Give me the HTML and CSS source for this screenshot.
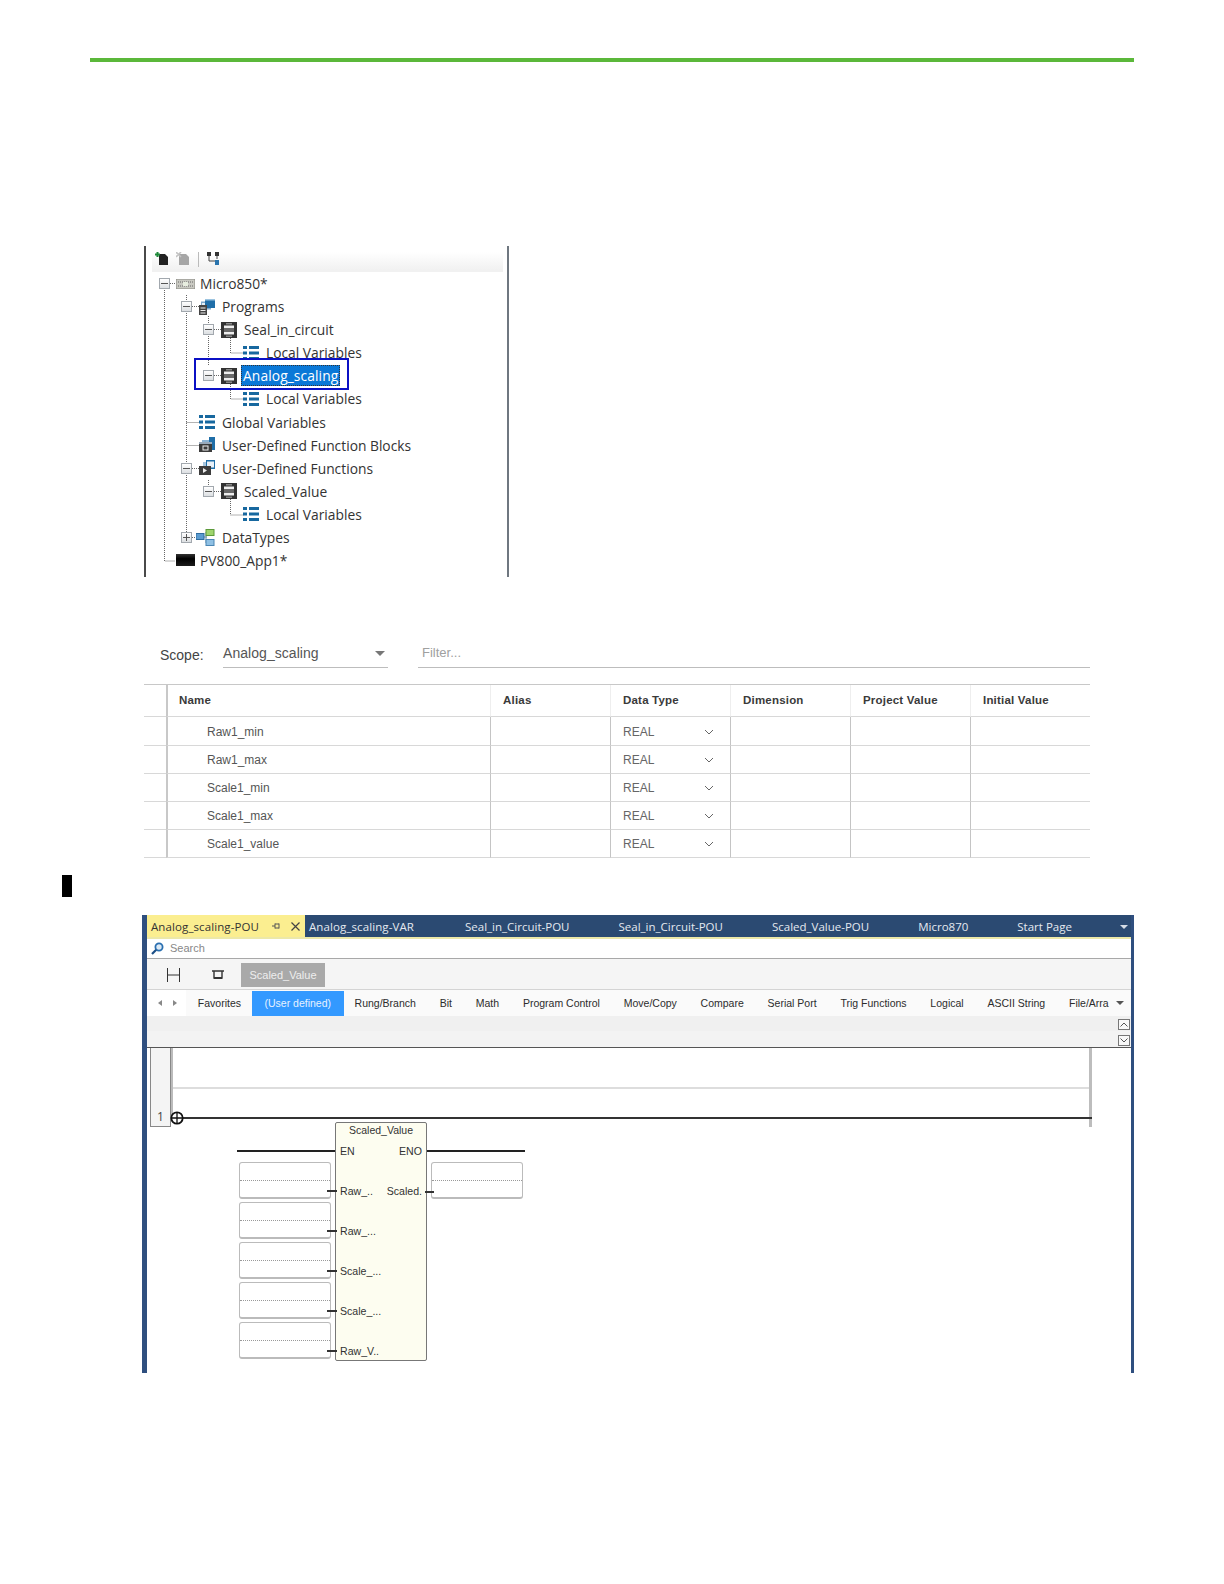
FILE: index.html
```html
<!DOCTYPE html>
<html lang="en">
<head>
<meta charset="utf-8">
<title>Analog scaling</title>
<link rel="stylesheet" href="styles.css">
</head>
<body>
<svg class="defs" width="0" height="0" aria-hidden="true">
  <symbol id="i-pou" viewBox="0 0 16 16"><rect width="16" height="16" fill="#333"/><rect x="3" y="3.500" width="10" height="9" fill="#eee"/><rect x="3" y="6" width="10" height="4" fill="#6a6a6a"/><rect x="5" y="1" width="6" height="1.500" fill="#888"/><rect x="5" y="13.500" width="6" height="1.500" fill="#888"/></symbol>
  <symbol id="i-list" viewBox="0 0 16 14"><g fill="#17689f"><rect y="0" width="4" height="3"/><rect x="6" y="0" width="10" height="3"/><rect y="5.5" width="4" height="3"/><rect x="6" y="5.5" width="10" height="3"/><rect y="11" width="4" height="3"/><rect x="6" y="11" width="10" height="3"/></g></symbol>
  <symbol id="i-programs" viewBox="0 0 16 16"><rect x="2" y="2.500" width="10" height="8" fill="#7fa9cc"/><rect x="3" y="4" width="8" height="2" fill="#e6eff6"/><rect x="6" y="0" width="10" height="9" fill="#1f6ea8"/><rect x="6" y="0" width="10" height="1.500" fill="#9cc4e0"/><rect x="0" y="6" width="8" height="10" fill="#444"/><rect x="1.500" y="8.500" width="5" height="1" fill="#eee"/><rect x="1.500" y="11" width="5" height="1" fill="#eee"/><rect x="1.500" y="13.500" width="5" height="1" fill="#eee"/></symbol>
  <symbol id="i-udfb" viewBox="0 0 16 16"><rect x="3" y="3" width="9" height="6" fill="#8db4d4"/><rect x="10" y="0" width="6" height="13" fill="#1f6ea8"/><rect x="0" y="5" width="13" height="10" fill="#3c3c3c"/><rect x="0" y="5" width="13" height="2" fill="#9ab" /><rect x="4" y="9" width="5" height="4" fill="none" stroke="#eee"/></symbol>
  <symbol id="i-udf" viewBox="0 0 16 16"><rect x="4" y="2" width="9" height="7" fill="#a8c6de"/><rect x="7" y="0" width="9" height="9" fill="#1f6ea8"/><rect x="8" y="1.500" width="7" height="6" fill="#e8f0f8"/><rect x="0" y="6" width="12" height="9" fill="#3c3c3c"/><path d="M4 8l4 2.500L4 13z" fill="#eee"/></symbol>
  <symbol id="i-types" viewBox="0 0 19 17"><path d="M8 8h3M10 3v11" stroke="#6b8fa8" fill="none"/><rect y="4.500" width="8" height="6" fill="#5b9bd0" stroke="#2f6c9e"/><rect x="10" y="0.500" width="8" height="6" fill="#9fd46d" stroke="#5c9a3a"/><rect x="10" y="10.500" width="8" height="6" fill="#8fc0e4" stroke="#4b86b3"/></symbol>
  <symbol id="i-micro" viewBox="0 0 19 10"><rect width="19" height="10" fill="#c9c9c2" stroke="#8a8a84"/><path d="M2 3h15M2 7h15" stroke="#666" stroke-dasharray="1 1"/><rect x="7" y="3" width="5" height="4" fill="#e8eee0"/></symbol>
</svg>

<main class="page">
  <div class="rule"></div>

  <section class="tree-panel">
    <div class="tree-tools">
      <svg class="tool" width="13" height="13" viewBox="0 0 13 13"><path d="M4 2h6l3 3v8H4z" fill="#222"/><path d="M2.500 0v5M0 2.500h5" stroke="#1f8a3a" stroke-width="2"/></svg>
      <svg class="tool" width="13" height="13" viewBox="0 0 13 13"><path d="M3 2h7l3 3v8H3z" fill="#a6a6a6"/><path d="M0 0l5 5M5 0L0 5" stroke="#c4c4c4" stroke-width="1.600"/></svg>
      <span class="tool-sep"></span>
      <svg class="tool" width="12" height="13" viewBox="0 0 12 13"><path d="M2 4v5h6M10 4v3" stroke="#444" fill="none"/><rect width="4" height="4" fill="#333"/><rect x="8" width="4" height="4" fill="#333"/><rect x="8" y="8" width="4" height="5" fill="#2a74ad"/></svg>
    </div>
    <svg class="tree-lines" width="364" height="330" viewBox="0 0 364 330">
      <path d="M18.500 44v271h11M40.500 49v242M62.500 70v50M84.500 92v15h13M84.500 138v15h13M62.500 234v12M84.500 253v16h13M24 37.500h5M46 60.500h7M68 83.500h7M68 129.500h7M40.500 176.500h13M40.500 199.500h13M46 222.500h7M68 245.500h7M46 291.500h5" fill="none" stroke="#666" stroke-dasharray="1 1"/>
    </svg>
    <ul class="tree">
      <li class="node lv0"><span class="box minus"></span><svg class="ic ic-micro"><use href="#i-micro"/></svg><span>Micro850*</span></li>
      <li class="node lv1"><span class="box minus"></span><svg class="ic"><use href="#i-programs"/></svg><span>Programs</span></li>
      <li class="node lv2"><span class="box minus"></span><svg class="ic"><use href="#i-pou"/></svg><span>Seal_in_circuit</span></li>
      <li class="node lv3"><span class="box none"></span><svg class="ic ic-list"><use href="#i-list"/></svg><span>Local Variables</span></li>
      <li class="node lv2"><span class="box minus"></span><svg class="ic"><use href="#i-pou"/></svg><span class="selected">Analog_scaling</span></li>
      <li class="node lv3"><span class="box none"></span><svg class="ic ic-list"><use href="#i-list"/></svg><span>Local Variables</span></li>
      <li class="node lv1"><span class="box none"></span><svg class="ic ic-list"><use href="#i-list"/></svg><span>Global Variables</span></li>
      <li class="node lv1"><span class="box none"></span><svg class="ic"><use href="#i-udfb"/></svg><span>User-Defined Function Blocks</span></li>
      <li class="node lv1"><span class="box minus"></span><svg class="ic"><use href="#i-udf"/></svg><span>User-Defined Functions</span></li>
      <li class="node lv2"><span class="box minus"></span><svg class="ic"><use href="#i-pou"/></svg><span>Scaled_Value</span></li>
      <li class="node lv3"><span class="box none"></span><svg class="ic ic-list"><use href="#i-list"/></svg><span>Local Variables</span></li>
      <li class="node lv1"><span class="box plus"></span><svg class="ic ic-types"><use href="#i-types"/></svg><span>DataTypes</span></li>
      <li class="node lv0"><span class="box none"></span><span class="ic-screen"></span><span>PV800_App1*</span></li>
    </ul>
    <div class="tree-focus"></div>
  </section>

  <section class="vars">
    <div class="scope">
      <span class="scope-label">Scope:</span>
      <div class="scope-select"><span>Analog_scaling</span><i class="tri"></i></div>
      <div class="scope-filter">Filter...</div>
    </div>
    <div class="grid">
      <div class="cell head gut"></div><div class="cell head">Name</div><div class="cell head">Alias</div><div class="cell head">Data Type</div><div class="cell head">Dimension</div><div class="cell head">Project Value</div><div class="cell head">Initial Value</div>

      <div class="cell gut"></div><div class="cell name">Raw1_min</div><div class="cell"></div><div class="cell type">REAL<svg width="10" height="6" viewBox="0 0 10 6"><path d="M1 1l4 4 4-4" fill="none" stroke="#666"/></svg></div><div class="cell"></div><div class="cell"></div><div class="cell"></div>

      <div class="cell gut"></div><div class="cell name">Raw1_max</div><div class="cell"></div><div class="cell type">REAL<svg width="10" height="6" viewBox="0 0 10 6"><path d="M1 1l4 4 4-4" fill="none" stroke="#666"/></svg></div><div class="cell"></div><div class="cell"></div><div class="cell"></div>

      <div class="cell gut"></div><div class="cell name">Scale1_min</div><div class="cell"></div><div class="cell type">REAL<svg width="10" height="6" viewBox="0 0 10 6"><path d="M1 1l4 4 4-4" fill="none" stroke="#666"/></svg></div><div class="cell"></div><div class="cell"></div><div class="cell"></div>

      <div class="cell gut"></div><div class="cell name">Scale1_max</div><div class="cell"></div><div class="cell type">REAL<svg width="10" height="6" viewBox="0 0 10 6"><path d="M1 1l4 4 4-4" fill="none" stroke="#666"/></svg></div><div class="cell"></div><div class="cell"></div><div class="cell"></div>

      <div class="cell gut"></div><div class="cell name">Scale1_value</div><div class="cell"></div><div class="cell type">REAL<svg width="10" height="6" viewBox="0 0 10 6"><path d="M1 1l4 4 4-4" fill="none" stroke="#666"/></svg></div><div class="cell"></div><div class="cell"></div><div class="cell"></div>
    </div>
  </section>

  <div class="marker"></div>

  <section class="ide">
    <div class="tabs">
      <div class="tab active"><span>Analog_scaling-POU</span>
        <svg class="pin" width="8" height="8" viewBox="0 0 8 8"><path d="M0 4h3M3 1.500v5M3 2h4M3 6h4M7 1.500v5" stroke="#555" fill="none"/></svg>
        <svg class="close" width="9" height="9" viewBox="0 0 9 9"><path d="M.5.5l8 8M8.500.5l-8 8" stroke="#444" stroke-width="1.200"/></svg>
      </div>
      <div class="tab-rest">
        <span class="tab-var">Analog_scaling-VAR</span><span>Seal_in_Circuit-POU</span><span>Seal_in_Circuit-POU</span><span>Scaled_Value-POU</span><span>Micro870</span><span>Start Page</span>
      </div>
      <i class="tab-menu"></i>
    </div>
    <div class="search">
      <svg width="13" height="13" viewBox="0 0 13 13"><circle cx="8" cy="5" r="3.600" fill="#dceaf6" stroke="#2a6fb0" stroke-width="1.800"/><path d="M5.200 7.800L1 12" stroke="#1c4f86" stroke-width="2.200"/></svg>
      <span>Search</span>
    </div>
    <div class="toolbar">
      <svg class="t-rung" width="13" height="14" viewBox="0 0 13 14"><path d="M.5 0v14M12.500 0v14M0 7h13" stroke="#333" fill="none"/></svg>
      <svg class="t-branch" width="12" height="10" viewBox="0 0 12 10"><path d="M0 1h12M2 1v7h8V1" stroke="#333" stroke-width="1.400" fill="none"/><rect x="2" y="7" width="8" height="2" fill="#333"/></svg>
      <span class="t-chip">Scaled_Value</span>
    </div>
    <div class="palette">
      <div class="pal-nav"><i class="tl"></i><i class="tr"></i></div>
      <span class="pal">Favorites</span>
      <span class="pal on">(User defined)</span>
      <span class="pal">Rung/Branch</span><span class="pal">Bit</span><span class="pal">Math</span><span class="pal">Program Control</span><span class="pal">Move/Copy</span><span class="pal">Compare</span><span class="pal">Serial Port</span><span class="pal">Trig Functions</span><span class="pal">Logical</span><span class="pal">ASCII String</span><span class="pal">File/Arra</span>
      <i class="pal-more"></i>
    </div>
    <div class="bands">
      <div class="band b1"><span class="spin"><svg width="8" height="5" viewBox="0 0 8 5"><path d="M.5 4.500L4 1l3.500 3.500" fill="none" stroke="#555"/></svg></span></div>
      <div class="band b2"><span class="spin"><svg width="8" height="5" viewBox="0 0 8 5"><path d="M.5.5L4 4 7.500 .5" fill="none" stroke="#555"/></svg></span></div>
    </div>
    <div class="canvas">
      <div class="gutter">1</div>
      <div class="gutter-edge"></div>
      <div class="rung-top"></div>
      <div class="rung-end"></div>
      <div class="rung"></div>
      <svg class="rung-dot" width="14" height="14" viewBox="0 0 14 14"><circle cx="7" cy="7" r="5.700" fill="#fff" stroke="#111" stroke-width="1.800"/><path d="M7 2v10M2 7h10" stroke="#111" stroke-width="1.300"/></svg>

      <div class="wire w-en"></div>
      <div class="wire w-eno"></div>

      <div class="inputs">
        <div class="var-box"></div><div class="var-box"></div><div class="var-box"></div><div class="var-box"></div><div class="var-box"></div>
      </div>
      <div class="var-box out"></div>

      <div class="block">
        <div class="block-title">Scaled_Value</div>
        <div class="pin-row"><span class="lbl">EN</span><span class="lbl">ENO</span></div>
        <div class="pin-row stub"><span class="lbl">Raw_..</span><span class="lbl stub-out">Scaled.</span></div>
        <div class="pin-row stub"><span class="lbl">Raw_...</span></div>
        <div class="pin-row stub"><span class="lbl">Scale_...</span></div>
        <div class="pin-row stub"><span class="lbl">Scale_...</span></div>
        <div class="pin-row stub"><span class="lbl">Raw_V..</span></div>
      </div>
    </div>
  </section>
</main>
</body>
</html>
```
FILE: styles.css
```css
* { box-sizing: border-box; }
html, body { margin: 0; padding: 0; background: #fff; }
body { height: 1584px; overflow: hidden; font-family: "Liberation Sans", Arial, sans-serif; color: #333; }
.defs { position: absolute; }
.page { padding-top: 58px; }
.rule { width: 1044px; height: 4px; margin-left: 90px; background: #5bb83a; }

/* project tree */
.tree-panel { position: relative; width: 365px; height: 331px; margin: 184px 0 0 144px; border-left: 2px solid #4a4a4a; border-right: 2px solid #6f7780; padding: 6px 4px 0 6px; font-family: "Open Sans", sans-serif; font-size: 13.8px; color: #333; }
.tree-tools { display: flex; align-items: flex-start; height: 20px; padding: 0 0 0 3px; background: linear-gradient(#fff, #f1f1f1 90%); }
.tool { margin-right: 8px; flex: none; }
.tool-sep { width: 1px; height: 15px; background: #bbb; margin: 0 8px 0 1px; }
.tree { list-style: none; margin: 0; padding: 0; position: relative; left: -6px; }
.node { display: grid; grid-template-columns: 18px 23px auto; align-items: center; height: 23.080px; white-space: nowrap; justify-content: start; }
.lv0 { padding-left: 13px; }
.lv1 { padding-left: 35px; }
.lv2 { padding-left: 57px; }
.lv3 { padding-left: 79px; }
.box { position: relative; display: block; width: 11px; height: 11px; }
.minus, .plus { border: 1px solid #a2a8ae; background: linear-gradient(#fff, #dcdfe2); }
.minus::before, .plus::before { content: ""; position: absolute; left: 1px; right: 1px; top: 4px; height: 1px; background: #555; }
.plus::after { content: ""; position: absolute; top: 1px; bottom: 1px; left: 4px; width: 1px; background: #555; }
.ic { display: block; width: 16px; height: 16px; }
.ic-list { height: 14px; }
.ic-micro { width: 19px; height: 10px; margin-left: -1px; }
.ic-types { width: 19px; height: 17px; margin-left: -3px; }
.ic-screen { display: block; width: 19px; height: 12px; margin-left: -1px; background: linear-gradient(#333, #000 40%, #1c1c1c); }
.selected { margin-left: -3px; padding: 1px 2px 0; height: 21px; line-height: 20px; letter-spacing: .1px; background: #0a78d7; color: #fff; outline: 1px dotted #333; outline-offset: -1px; }
.tree-lines { position: absolute; left: 0; top: 0; pointer-events: none; }
.tree-focus { position: absolute; left: 48px; top: 112px; width: 155px; height: 32px; border: 2px solid #0b10c4; pointer-events: none; }

/* variable table */
.vars { width: 946px; margin: 63px 0 0 144px; }
.scope { display: flex; align-items: flex-end; height: 28px; }
.scope-label { width: 79px; padding: 0 0 5px 16px; font-size: 14px; color: #444; }
.scope-select { display: flex; justify-content: space-between; align-items: center; width: 165px; height: 28px; padding: 0 2px 1px 0; border-bottom: 1px solid #bdbdbd; font-size: 14px; color: #555; letter-spacing: .05px; }
.tri { display: block; width: 0; height: 0; margin-right: 1px; border: 5px solid transparent; border-top-color: #777; border-bottom: 0; }
.scope-filter { flex: 1; height: 28px; margin-left: 30px; padding: 5px 0 0 4px; border-bottom: 1px solid #bdbdbd; font-size: 13px; color: #a0a0a0; }
.grid { display: grid; grid-template-columns: 22px 324px 120px 120px 120px 120px 120px; grid-template-rows: 32px 29px 28px 28px 28px 28px; margin-top: 16px; border-top: 1px solid #c8c8c8; }
.cell { display: flex; align-items: center; padding: 1px 0 0 12px; border-left: 1px solid #c4c4c4; border-bottom: 1px solid #d8d8d8; font-size: 12px; color: #555; }
.cell.gut { border-left: 0; }
.gut + .cell { border-left: 2px solid #c8c8c8; padding-left: 11px; }
.head { font-size: 11.500px; font-weight: 700; color: #3a3a3a; letter-spacing: .2px; border-left-color: #eee; padding-top: 0; padding-bottom: 1px; }
.gut + .name { padding-left: 39px; }
.type { justify-content: space-between; padding-right: 16px; color: #666; }
.marker { width: 10px; height: 22px; margin: 17px 0 0 62px; background: #000; }

/* editor */
.ide { width: 992px; height: 458px; margin: 18px 0 0 142px; border-left: 5px solid #2f4f7f; border-right: 3px solid #2f4f7f; display: flex; flex-direction: column; font-size: 11px; }
.tabs { display: flex; align-items: stretch; height: 24px; flex: none; background: #2b4a72; border-bottom: 2px solid #ece8a8; font-family: "Open Sans", sans-serif; font-size: 11.500px; color: #e4e9f0; position: relative; }
.tab { display: flex; align-items: center; white-space: nowrap; }
.active { flex: none; width: 158px; padding-left: 4px; background: #fbee90; color: #333; letter-spacing: .1px; }
.pin { margin-left: 13px; }
.close { margin-left: 11px; }
.tab-rest { display: flex; align-items: center; gap: 49px; padding: 1px 0 0 4px; white-space: nowrap; }
.tab-var { letter-spacing: .1px; margin-right: 2px; }
.tab-menu { position: absolute; right: 3px; top: 10px; width: 0; height: 0; border: 4px solid transparent; border-top-color: #d5dce6; border-bottom: 0; }
.search { display: flex; align-items: center; gap: 6px; height: 20px; flex: none; padding: 0 0 1px 4px; background: #fff; border-bottom: 1px solid #a8a8a8; color: #888; }
.toolbar { display: flex; align-items: center; height: 31px; flex: none; padding: 2px 0 0 20px; background: #f5f5f5; border-bottom: 1px solid #d4d4d4; }
.t-branch { margin-left: 32px; }
.t-chip { display: flex; align-items: center; justify-content: center; width: 84px; height: 24px; margin-left: 17px; background: #a9a9a9; color: #eee; }
.palette { display: flex; align-items: center; gap: 23.800px; height: 26px; flex: none; background: #fafafa; color: #2c2c2c; font-size: 10.500px; position: relative; }
.pal-nav { display: flex; align-items: center; gap: 11px; flex: none; width: 39px; margin-right: -12px; height: 26px; padding-left: 11px; background: #fff; }
.tl { border: 3.500px solid transparent; border-right: 4px solid #888; border-left: 0; }
.tr { border: 3.500px solid transparent; border-left: 4px solid #888; border-right: 0; }
.pal { flex: none; white-space: nowrap; }
.on { display: flex; align-items: center; justify-content: center; width: 92px; height: 25px; margin: 0 -13px; background: #3399ff; color: #e6f2ff; }
.pal-more { margin-left: -17px; border: 4px solid transparent; border-top: 4px solid #555; border-bottom: 0; }
.band { height: 15px; background: #f0f0f0; display: flex; justify-content: flex-end; align-items: flex-end; padding: 0 1px 1px 0; }
.b2 { height: 16px; background: #f3f3f3; }
.bands { flex: none; }
.spin { display: flex; align-items: center; justify-content: center; width: 12px; height: 11px; border: 1px solid #777; background: #f8f8f8; }
.canvas { position: relative; flex: 1; border-top: 1px solid #555; background: #fff; }
.gutter { position: absolute; left: 3px; top: 0; width: 21px; height: 79px; display: flex; align-items: flex-end; justify-content: center; padding-bottom: 1px; background: #f4f4f4; border: 1px solid #888; border-top: 0; font-family: "Open Sans", sans-serif; font-size: 12px; color: #444; }
.gutter-edge { position: absolute; left: 24px; top: 0; width: 2px; height: 67px; background: #bbb; }
.rung-top { position: absolute; left: 26px; top: 39px; width: 916px; height: 2px; background: #ddd; }
.rung-end { position: absolute; left: 942px; top: 0; width: 3px; height: 79px; background: #bdbdbd; }
.rung { position: absolute; left: 30px; top: 69px; width: 915px; height: 2px; background: #333; }
.rung-dot { position: absolute; left: 23px; top: 63px; }
.wire { position: absolute; height: 2px; background: #222; top: 102px; }
.w-en { left: 90px; width: 99px; }
.w-eno { left: 280px; width: 98px; }
.inputs { position: absolute; left: 92px; top: 114px; display: flex; flex-direction: column; gap: 3px; }
.var-box { position: relative; width: 92px; height: 37px; border: 1px solid #bbb; border-bottom-width: 2px; border-radius: 3px; background: #fff; }
.var-box::after { content: ""; position: absolute; left: 0; right: 0; top: 17px; border-top: 1px dotted #999; }
.var-box.out { position: absolute; left: 284px; top: 114px; }
.block { position: absolute; left: 188px; top: 74px; width: 92px; height: 239px; padding: 0 4px 0 4px; border: 1px solid #777; border-radius: 2px; background: #fdfdf0; display: flex; flex-direction: column; gap: 24px; font-size: 10.600px; color: #333; }
.block-title { height: 20px; margin-bottom: -24px; text-align: center; font-size: 10.500px; line-height: 14px; }
.pin-row { position: relative; display: flex; justify-content: space-between; align-items: center; height: 16px; white-space: nowrap; }
.stub::before { content: ""; position: absolute; left: -13px; top: 7px; width: 10px; height: 2px; background: #333; }
.stub-out { position: relative; }
.stub-out::after { content: ""; position: absolute; left: calc(100% + 3px); top: 6px; width: 9px; height: 2px; background: #333; }
```
